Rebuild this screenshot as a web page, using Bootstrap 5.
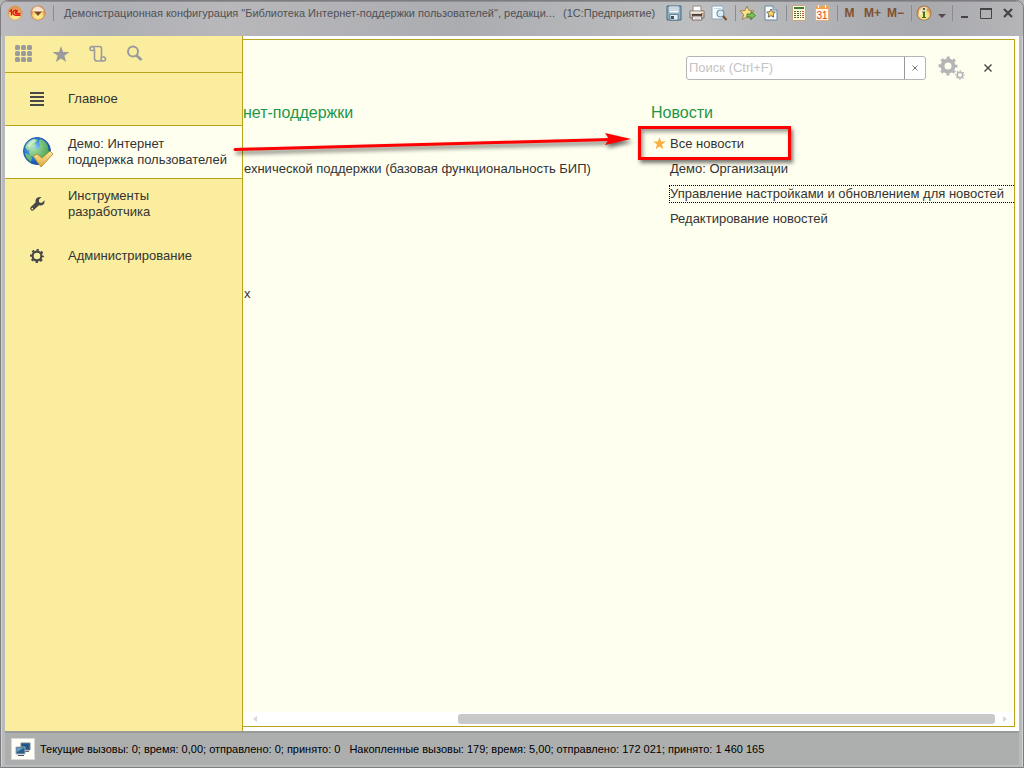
<!DOCTYPE html>
<html lang="ru">
<head>
<meta charset="utf-8">
<meta name="viewport" content="width=device-width, initial-scale=1">
<title>1С:Предприятие</title>
<link rel="stylesheet" href="https://cdn.jsdelivr.net/npm/bootstrap@5.3.0/dist/css/bootstrap.min.css">
<script src="https://cdn.jsdelivr.net/npm/bootstrap@5.3.0/dist/js/bootstrap.bundle.min.js"></script>
<style>
:root { --gold: #b9a41a; --cream: #fffff0; --sand: #fbed9e; }
body { font-family: "Liberation Sans", Arial, sans-serif; font-size: 13px; line-height: 16px; color: #333; background: #b5b5b9; }
a, a:hover { color: inherit; text-decoration: none; }
button { border: 0; background: none; padding: 0; color: inherit; }
svg { display: block; }
.app-window { min-height: 100vh; background: #b9babc; border: 1px solid #7d7d80; border-radius: 8px 8px 0 0; padding: 0 4px; box-shadow: inset 1px 0 #d2d2d4, inset -1px 0 #d2d2d4, inset 0 1px #8f8f93; }
.title-strip { height: 34px; margin: 1px -4px 0; padding: 0 4px 12px 2px; background: linear-gradient(90deg, #bcbcc0, #aeafb4 10%, #b8b8bb 22%, #abacb0 45%, #bebfc0 68%, #acadb1 85%, #a9aaae 91%, #b5b5b8); border-radius: 7px 7px 0 0; }
.title-text { font-size: 11px; color: #505054; padding-left: 10px; }
.round-btn { width: 23px; }
.tool-btn { width: 23px; height: 24px; flex: none; }
.tool-btn svg, .round-btn svg { margin: auto; }
.win-btn { width: 22px; }
.caret-btn { width: 13px; }
.bar-line { width: 5px; height: 16px; border-right: 1px solid #8b8b8f; flex: none; }
.mem-btn { font-size: 12px; font-weight: 700; color: #80502f; }
.side-panel { width: 238px; flex: none; background: var(--sand); border-right: 1px solid var(--gold); }
.side-tools { height: 37px; border-bottom: 1px solid var(--gold); padding: 0 10px; gap: 17px; }
.side-tools button { width: 20px; }
.side-item { height: 52px; display: flex; align-items: center; border-bottom: 1px solid transparent; }
.side-item:nth-child(1) { height: 53px; }
.side-item.current { background: var(--cream); border-bottom-color: var(--gold); border-top: 1px solid var(--gold); height: 54px; margin-top: -1px; margin-bottom: -1px; }
.side-icon { width: 63px; flex: none; }
.side-icon svg { margin: auto; }
.stage { background: #fff; padding: 3px 4px 4px 0; }
.function-panel { background: var(--cream); border: solid var(--gold); border-width: 1px 1px 1px 0; }
.search-row { height: 56px; padding-right: 14px; }
.search-group { width: 240px; height: 24px; border: 1px solid #b4b4b4; border-radius: 3px; background: #fff; }
.search-group input { border: 0; outline: 0; padding: 0 2px; font-size: 13px; min-width: 0; background: none; }
.search-group input::placeholder { color: #c4c4c4; opacity: 1; }
.clear-btn { width: 21px; border-left: 1px solid #999; }
.gear-btn { width: 28px; margin-left: 12px; }
.close-btn { width: 24px; margin-left: 10px; }
.link-area { padding-top: 8px; }
.section-head { font-size: 16px; line-height: 18px; color: #1c9647; margin: 0; font-weight: 400; }
.news-column { width: 363px; flex: none; }
.link-list { padding: 0; margin: 13px 0 0; list-style: none; }
.link-list li { height: 25px; }
.news-column .link-list { padding-left: 18px; }
.link-list a { display: block; white-space: nowrap; border: 1px dotted transparent; border-width: 1px 0 1px 1px; height: 18px; line-height: 16px; }
.link-list a.focused { border-color: #000; }
.fav-link { position: relative; }
.fav-star { position: absolute; left: -16px; top: 2px; }
.red-frame { position: absolute; left: -31px; top: -9px; width: 153px; height: 34px; border: 3px solid #fe0000; box-shadow: 2px 3px 4px #0008, inset 2px 3px 4px #0006; pointer-events: none; }
.arrow-mark { position: absolute; right: 377px; top: 87px; pointer-events: none; filter: drop-shadow(2px 3px 2px #0009); z-index: 2; }
.scroll-strip { height: 14px; background: #fff; padding: 0 7px 0 10px; color: #d8d8d8; }
.scroll-track { margin: 0 8px 0 5px; }
.scroll-thumb { width: 537px; height: 10px; border-radius: 3px; background: #c9c9c9; }
.status-strip { height: 34px; background: #adafae; border-top: 2px solid #999b9b; margin-bottom: 2px; color: #000; font-size: 11px; padding-left: 6px; gap: 5px; }
.status-btn { width: 24px; height: 22px; background: #fffff8; border: 1px solid #d8d8d4; }
</style>
</head>
<body>
<div class="app-window d-flex flex-column">
  <header class="title-strip d-flex align-items-center">
    <button class="tool-btn" aria-label="Меню 1С"><svg width="16" height="16" viewBox="0 0 16 16"><defs><radialGradient id="ball" cx=".5" cy=".7"><stop offset="0" stop-color="#fff49a"/><stop offset=".7" stop-color="#fcd77a"/><stop offset="1" stop-color="#e09a52"/></radialGradient></defs><circle cx="8" cy="8" r="7.2" fill="url(#ball)" stroke="#c99a70" stroke-width=".6"/><path d="M2.500 6.500 4.500 5v5.500M11 6.500Q10 5.200 8.500 5.200Q6 5.500 6 7.800Q6.200 10 8.500 10.300H13.500M10.500 7Q8.500 6.500 8.200 8Q8.500 8.600 10 8.500H13.500" fill="none" stroke="#e01818" stroke-width="1.400"/></svg></button>
    <button class="round-btn" aria-label="Главное меню"><svg width="16" height="16" viewBox="0 0 16 16"><circle cx="8" cy="8" r="7.500" fill="#c48a55"/><circle cx="8" cy="8" r="6.700" fill="url(#ball)"/><path d="M2 6Q4 1 8 1.500T14 6Q8 7 2 6" fill="#fff" opacity=".7"/><path d="M4 6.500h8L8 11z" fill="#7a4a2c"/></svg></button>
    <span class="bar-line"></span>
    <span class="title-text d-flex flex-grow-1 gap-2 text-nowrap"><span>Демонстрационная конфигурация "Библиотека Интернет-поддержки пользователей", редакци...</span><span>(1С:Предприятие)</span></span>
    <button class="tool-btn" aria-label="Сохранить"><svg width="16" height="16" viewBox="0 0 16 16"><path d="M1 1h14v14H1z" fill="#8bb0c5" stroke="#47697e"/><path d="M3.500 1.500h9v6h-9z" fill="#fff"/><path d="M4 3h8M4 5h8" stroke="#9aafbb"/><path d="M4 9.500h8V15H4z" fill="#e8f0f4" stroke="#47697e" stroke-width=".7"/><path d="M5 11h3v3H5z" fill="#456"/></svg></button>
    <button class="tool-btn" aria-label="Печать"><svg width="16" height="16" viewBox="0 0 16 16"><path d="M4 1h8v6H4z" fill="#fff" stroke="#998675"/><path d="M1 6h14v7H1z" fill="#c8c2bb" stroke="#77706a"/><path d="M1.500 6.500h13v2h-13z" fill="#eee7df"/><path d="M3 9h10v2H3z" fill="#493e39"/><path d="M4 11h8l1 4H3z" fill="#fff" stroke="#806b5d"/><path d="M5 13h6" stroke="#bbb"/><path d="M12 8h2v1h-2z" fill="#e06d23"/></svg></button>
    <button class="tool-btn" aria-label="Просмотр"><svg width="17" height="16" viewBox="0 0 17 16"><path d="M1 1h11v13H1z" fill="#f8fcff" stroke="#86a7bf"/><path d="M3 3.500h7" stroke="#c5d9e8"/><circle cx="9.500" cy="8.500" r="3.500" fill="#d7ecf6" stroke="#7591a4" stroke-width="1.200"/><path d="m12 11 3.500 4" stroke="#82502f" stroke-width="2.200"/></svg></button>
    <span class="bar-line"></span>
    <button class="tool-btn" aria-label="Добавить в избранное"><svg width="17" height="16" viewBox="0 0 17 16"><path d="m8 1 2 4.500 5 .5-3.700 3.300 1 5L8 11.800 3.500 14.300l1-5L1 6l5-.5z" fill="#ffe08a" stroke="#9c8450"/><path d="M8 9h4V6.500l4.500 4-4.500 4V12H8z" fill="#7cc35a" stroke="#2c762a" stroke-width=".8"/></svg></button>
    <button class="tool-btn" aria-label="Избранное"><svg width="14" height="16" viewBox="0 0 14 16"><path d="M1 1h8l4 4v10H1z" fill="#f8fcff" stroke="#66869a"/><path d="M9 1v4h4" fill="#bcd1dd" stroke="#66869a"/><path d="m7 4 1.300 2.800 3 .3-2.200 2 .6 3L7 10.600l-2.700 1.500.6-3-2.200-2 3-.3z" fill="#ffd769" stroke="#534c3e" stroke-width=".8"/></svg></button>
    <span class="bar-line"></span>
    <button class="tool-btn" aria-label="Калькулятор"><svg width="14" height="16" viewBox="0 0 14 16"><path d="M.5.5h13v15H.5z" fill="#fff9dc" stroke="#c8a880"/><path d="M2 2h10v2H2z" fill="#3e7c3c"/><path d="M2 6.500h7M2 8.500h7M2 10.500h7M2 12.500h7" stroke="#54683f" stroke-dasharray="2 1"/><path d="M10 6.500h2M10 8.500h2M10 10.500h2M10 12.500h2" stroke="#d0502c"/></svg></button>
    <button class="tool-btn" aria-label="Календарь"><svg width="14" height="16" viewBox="0 0 14 16"><path d="M.5 1h13v14.500H.5z" fill="#fff8e8" stroke="#e0b080"/><path d="M1 1h12v3H1z" fill="#efa34b"/><path d="M3.500 0v3m7-3v3" stroke="#fff"/><text x="7" y="13.500" font-size="10" text-anchor="middle" fill="#e03820">31</text></svg></button>
    <span class="bar-line"></span>
    <button class="tool-btn mem-btn">M</button><button class="tool-btn mem-btn">M+</button><button class="tool-btn mem-btn">M−</button>
    <span class="bar-line"></span>
    <button class="tool-btn" aria-label="О программе"><svg width="16" height="16" viewBox="0 0 16 16"><circle cx="8" cy="8" r="7.500" fill="#987553"/><circle cx="8" cy="8" r="6.700" fill="url(#ball)"/><path d="M3 5Q6 1 10 2T7 8t-4 2z" fill="#fff" opacity=".6"/><path d="M7 3h2v2H7zM6 6.500h3V12h1v1H6v-1h1V7.500H6z" fill="#377432"/></svg></button>
    <button class="tool-btn caret-btn" aria-label="Ещё"><svg width="8" height="10" viewBox="0 0 8 10"><path d="M0 6h8L4 10z" fill="#55474f"/></svg></button>
    <span class="bar-line"></span>
    <button class="tool-btn win-btn" aria-label="Свернуть"><svg width="11" height="11" viewBox="0 0 11 11"><path d="M2 8h7v2H2z" fill="#444"/></svg></button>
    <button class="tool-btn win-btn" aria-label="Развернуть"><svg width="12" height="11" viewBox="0 0 12 11"><path d="M.5 1h11v9.500H.5z" fill="none" stroke="#444"/><path d="M0 1h12" stroke="#444" stroke-width="2"/></svg></button>
    <button class="tool-btn win-btn" aria-label="Закрыть"><svg width="10" height="10" viewBox="0 0 10 10"><path d="m1 1 8 8m0-8-8 8" stroke="#444" stroke-width="2.200"/></svg></button>
  </header>

  <div class="d-flex flex-grow-1">
    <nav class="side-panel" aria-label="Разделы">
      <div class="side-tools d-flex align-items-center">
        <button aria-label="Функции"><svg width="18" height="18" viewBox="0 0 18 18" fill="#9b9b9d"><rect x="0" y="0" width="5" height="5" rx="1.500"/><rect x="6" y="0" width="5" height="5" rx="1.500"/><rect x="12" y="0" width="5" height="5" rx="1.500"/><rect x="0" y="6" width="5" height="5" rx="1.500"/><rect x="6" y="6" width="5" height="5" rx="1.500"/><rect x="12" y="6" width="5" height="5" rx="1.500"/><rect x="0" y="12" width="5" height="5" rx="1.500"/><rect x="6" y="12" width="5" height="5" rx="1.500"/><rect x="12" y="12" width="5" height="5" rx="1.500"/></svg></button>
        <button aria-label="Избранное"><svg width="18" height="18" viewBox="0 0 18 18"><path d="m9 1 2.100 5.900 6.400.1-5.100 3.800L14.200 17 9 13.400 3.800 17l1.800-6.200L.5 7l6.400-.1z" fill="#9b9b9d"/></svg></button>
        <button aria-label="История"><svg width="18" height="18" viewBox="0 0 18 18" fill="none" stroke="#9b9b9d" stroke-width="1.600"><path d="M5 5.500H3A2 2 0 1 1 3 1.500h7.500Q12.500 1.500 12.500 4v8M3 1.500Q5.500 2 5.500 5v8.500Q5.500 16 8 16h6.500a2 2 0 0 0 0-4h-1.800q-1.700 1.500.3 3.500"/></svg></button>
        <button aria-label="Поиск"><svg width="18" height="18" viewBox="0 0 18 18" fill="none" stroke="#9b9b9d"><circle cx="7" cy="6.500" r="5" stroke-width="2"/><path d="m10.500 10.500 5 4.500" stroke-width="3"/></svg></button>
      </div>
      <div>
        <a href="#" class="side-item"><span class="side-icon"><svg width="14" height="14" viewBox="0 0 14 14"><path d="M0 1h14M0 5h14M0 9h14M0 13h14" stroke="#484848" stroke-width="2"/></svg></span>Главное</a>
        <a href="#" class="side-item current"><span class="side-icon"><svg width="32" height="32" viewBox="-2 0 32 32"><defs><radialGradient id="sea" cx=".4" cy=".4" r=".65"><stop offset="0" stop-color="#a4d8f8"/><stop offset=".5" stop-color="#3384d7"/><stop offset="1" stop-color="#0c3fa8"/></radialGradient><radialGradient id="land" cx=".3" cy=".3" r=".8"><stop offset="0" stop-color="#b8e8b8"/><stop offset="1" stop-color="#3f9e48"/></radialGradient><linearGradient id="tick" x2="0" y2="1"><stop stop-color="#ffe9a0"/><stop offset="1" stop-color="#dca938"/></linearGradient></defs><circle cx="14" cy="15" r="13.500" fill="url(#sea)" stroke="#285fa9"/><path d="M2 11Q5 4 11 3l4 1-3 3 1 3-4 2-1 3-4-1zM17 3q6 2 8 7l1 7-4 3-2 6-6 1-2-6-5-1-1-4 4-4 5 1 2-3-1-4zM2 17l4 2 3 3-1 4Q3 23 2 17z" fill="url(#land)"/><path d="M4 10Q7 4 12 3l1 2-4 3-3 4z" fill="#e8f8f4" opacity=".6"/><path d="m10 20 4-2 5 4 8-7 3 3-12 13z" fill="url(#tick)" stroke="#a9832c" stroke-width=".8"/></svg></span><span>Демо: Интернет<br>поддержка пользователей</span></a>
        <a href="#" class="side-item"><span class="side-icon"><svg width="16" height="16" viewBox="0 0 16 16"><path d="M12.500 1 10 3.500v2.200l1 1h2l2.500-2.500q.5 3-1.300 4.500-2 1.200-4.200.5L4.800 14q-1.600 1.300-3 0t0-3L6.500 6.500Q6 4 7.500 2.300 9.500.500 12.500 1zM3.300 11.700a.9.9 0 1 0 0 1.800.9.900 0 0 0 0-1.800" fill="#484848" fill-rule="evenodd"/></svg></span><span>Инструменты<br>разработчика</span></a>
        <a href="#" class="side-item"><span class="side-icon"><svg width="14" height="14" viewBox="0 0 14 14"><circle cx="7" cy="7" r="4.400" fill="none" stroke="#484848" stroke-width="2.200"/><circle cx="7" cy="7" r="6" fill="none" stroke="#484848" stroke-width="2" stroke-dasharray="2.360 2.352" stroke-dashoffset="1.180"/></svg></span>Администрирование</a>
      </div>
    </nav>

    <main class="stage d-flex flex-grow-1">
      <section class="function-panel d-flex flex-column flex-grow-1 position-relative">
        <div class="search-row d-flex align-items-center justify-content-end">
          <form class="search-group d-flex overflow-hidden" role="search"><input class="flex-grow-1" type="text" aria-label="Поиск" placeholder="Поиск (Ctrl+F)"><button type="reset" class="clear-btn" aria-label="Очистить"><svg class="m-auto" width="6" height="6" viewBox="0 0 6 6"><path d="m.5.500 5 5m0-5-5 5" stroke="#666" stroke-width=".9"/></svg></button></form>
          <button class="gear-btn" aria-label="Настройки"><svg width="28" height="24" viewBox="0 0 28 24" fill="none" stroke="#b5b5b8"><circle cx="10" cy="10" r="5.500" stroke-width="4"/><circle cx="10" cy="10" r="8.200" stroke-width="2.400" stroke-dasharray="3.220 3.220" stroke-dashoffset="1.610"/><circle cx="22" cy="19" r="2.700" stroke-width="1.600"/><circle cx="22" cy="19" r="4" stroke-width="1.400" stroke-dasharray="1.570 1.570" stroke-dashoffset=".785"/></svg></button>
          <button class="close-btn" aria-label="Закрыть панель"><svg class="m-auto" width="8" height="8" viewBox="0 0 8 8"><path d="m.5.500 7 7m0-7-7 7" stroke="#444" stroke-width="1.400"/></svg></button>
        </div>
        <div class="link-area d-flex flex-grow-1">
          <div class="flex-grow-1 overflow-hidden">
            <h2 class="section-head">нет-поддержки</h2>
            <ul class="link-list"><li></li><li><a href="#">ехнической поддержки (базовая функциональность БИП)</a></li><li></li><li></li><li></li><li></li><li><a href="#">х</a></li></ul>
          </div>
          <div class="news-column">
            <h2 class="section-head">Новости</h2>
            <ul class="link-list">
              <li class="fav-link"><svg class="fav-star" width="13" height="13" viewBox="0 0 13 13"><path d="m6.500 0 1.600 4.500h4.700L9 7.400l1.400 4.800-3.900-2.800-3.900 2.800L4 7.400.2 4.500h4.700z" fill="#fbb040"/></svg><a href="#">Все новости</a><span class="red-frame"></span></li>
              <li><a href="#">Демо: Организации</a></li>
              <li><a href="#" class="focused">Управление настройками и обновлением для новостей</a></li>
              <li><a href="#">Редактирование новостей</a></li>
            </ul>
          </div>
        </div>
        <div class="scroll-strip d-flex align-items-center">
          <svg width="4" height="6" viewBox="0 0 4 6"><path d="M4 0v6L0 3z" fill="currentColor"/></svg>
          <div class="scroll-track d-flex flex-grow-1 justify-content-end"><div class="scroll-thumb"></div></div>
          <svg width="4" height="6" viewBox="0 0 4 6"><path d="M0 0v6l4-3z" fill="currentColor"/></svg>
        </div>
        <svg class="arrow-mark" width="406" height="32" viewBox="0 0 406 32"><path d="M4 22.500 380 12.500" stroke="#fe0000" stroke-width="3" stroke-linecap="round"/><path d="m374 6 26 6-26 6 4-6z" fill="#fe0000"/></svg>
      </section>
    </main>
  </div>

  <footer class="status-strip d-flex align-items-center">
    <button class="status-btn" aria-label="Показатели производительности"><svg class="m-auto" width="16" height="15" viewBox="0 0 16 15"><path d="M6 1h9v7H6z" fill="#1f5685" stroke="#78828b"/><path d="M9 9h5v1H9z" fill="#666"/><path d="M1 5h9v7H1z" fill="#235e8f" stroke="#a4adb4"/><path d="m2 6 7 0-7 4z" fill="#669ac0"/><path d="M3 13h6v1H3z" fill="#555"/></svg></button>
    <span class="text-nowrap">Текущие вызовы: 0; время: 0,00; отправлено: 0; принято: 0</span>
    <span class="text-nowrap ms-1">Накопленные вызовы: 179; время: 5,00; отправлено: 172 021; принято: 1 460 165</span>
  </footer>
</div>
</body>
</html>
